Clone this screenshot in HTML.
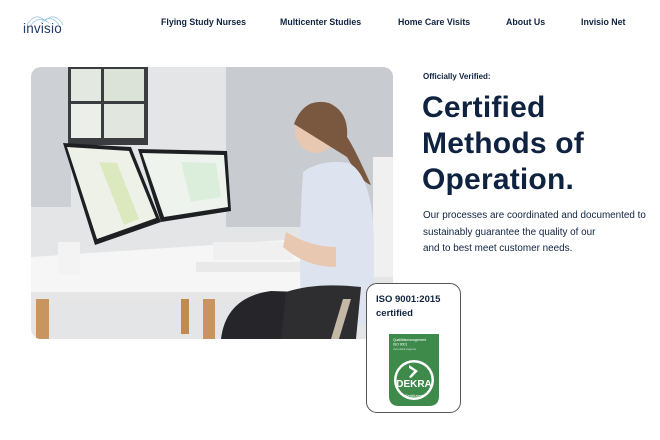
<!DOCTYPE html>
<html><head><meta charset="utf-8"><style>
*{margin:0;padding:0;box-sizing:border-box}
body{width:660px;height:440px;background:#fff;font-family:"Liberation Sans",sans-serif;color:#0f2340;position:relative;overflow:hidden}
.logo{position:absolute;left:23px;top:13px}
.logo span{position:absolute;left:0;top:8px;font-size:13.5px;color:#1f3a6b;letter-spacing:.2px}
nav a{position:absolute;top:17px;font-size:8.8px;font-weight:bold;color:#0f2340;text-decoration:none;white-space:nowrap}
.photo{position:absolute;left:31px;top:67px;width:362px;height:272px;border-radius:10px;overflow:hidden}
.ov{position:absolute;left:423px;top:72px;font-size:8px;font-weight:bold}
h1{position:absolute;left:422px;top:90px;font-size:30px;line-height:36px;font-weight:bold;letter-spacing:.2px}
.p{position:absolute;left:423px;top:208px;font-size:9.9px;line-height:16.5px;white-space:nowrap}
.card{position:absolute;left:366px;top:283px;width:95px;height:130px;background:#fff;border:1px solid #555;border-radius:11px}
.card b{position:absolute;left:9px;top:9px;font-size:9.5px;line-height:14px}
</style></head><body>
<div class="logo">
<svg width="40" height="14" viewBox="0 0 40 14" style="position:absolute;left:2px;top:0"><path d="M2 12 Q10 -2 20 8 Q30 -2 38 12 M6 12 Q14 2 24 10 M16 10 Q26 0 34 12" stroke="#9cc8e6" stroke-width="0.8" fill="none"/></svg>
<span>invisio</span></div>
<nav><a style="left:161px">Flying Study Nurses</a><a style="left:280px">Multicenter Studies</a><a style="left:398px">Home Care Visits</a><a style="left:506px">About Us</a><a style="left:581px">Invisio Net</a></nav>
<div class="photo">
<svg width="362" height="272" viewBox="0 0 362 272">
<rect width="362" height="272" fill="#e3e5e7"/>
<rect x="195" y="0" width="167" height="160" fill="#c8ccd0"/>
<rect x="0" y="0" width="40" height="140" fill="#cdd1d6"/>
<rect x="37" y="0" width="80" height="78" fill="#3a3c40"/>
<rect x="40" y="2" width="30" height="32" fill="#e3e8e1"/><rect x="73" y="2" width="40" height="32" fill="#dbe2d8"/>
<rect x="40" y="37" width="30" height="34" fill="#eceee9"/><rect x="73" y="37" width="40" height="34" fill="#e1e6df"/>
<rect x="342" y="90" width="20" height="120" fill="#f0f0f0"/>
<polygon points="32,76 100,80 130,155 64,178" fill="#1d1f22"/>
<polygon points="36,80 98,84 125,151 66,172" fill="#eef1e8"/>
<polygon points="68,95 86,96 108,152 93,158" fill="#dce9bf"/>
<polygon points="107,82 196,84 200,144 130,155" fill="#1d1f22"/>
<polygon points="111,86 193,88 197,140 133,150" fill="#eef3ee"/>
<polygon points="150,95 185,96 190,130 160,135" fill="#dbeedc"/>
<polygon points="0,190 300,170 335,210 330,225 0,235" fill="#f6f6f6"/>
<rect x="0" y="225" width="330" height="10" fill="#e6e6e6"/>
<rect x="5" y="232" width="13" height="40" fill="#c9955f"/><rect x="172" y="232" width="12" height="40" fill="#c9955f"/><rect x="150" y="232" width="8" height="35" fill="#c08a55"/>
<rect x="27" y="175" width="22" height="32" fill="#f3f3f3"/>
<rect x="165" y="195" width="105" height="10" fill="#e9e9e9"/>
<rect x="182" y="175" width="80" height="18" fill="#f0f0f0"/>
<ellipse cx="285" cy="62" rx="21" ry="24" fill="#e9c8b2"/>
<path d="M263 57 Q273 30 298 36 Q318 45 316 70 Q323 80 340 118 Q330 115 316 90 Z" fill="#7a5840"/>
<path d="M272 105 Q290 92 318 96 Q343 110 343 180 L343 258 L272 260 Q266 200 272 105 Z" fill="#dde4ef"/>
<path d="M255 165 Q280 180 305 180 L305 200 Q275 200 252 180 Z" fill="#e9c8b2"/>
<path d="M190 272 Q195 230 240 224 L300 226 L300 272 Z" fill="#26262a"/>
<path d="M250 272 L255 225 Q285 215 330 220 L325 272 Z" fill="#2e2e31"/>
<path d="M300 272 L312 232 L320 232 L308 272 Z" fill="#c3b7a6"/>
</svg></div>
<div class="ov">Officially Verified:</div>
<h1>Certified<br>Methods of<br>Operation.</h1>
<div class="p">Our processes are coordinated and documented to<br>sustainably guarantee the quality of our<br>and to best meet customer needs.</div>
<div class="card"><b>ISO 9001:2015<br>certified</b>
<svg width="50" height="72" viewBox="0 0 50 72" style="position:absolute;left:22px;top:50px">
<path d="M0 0 H50 V62 Q50 72 40 72 H10 Q0 72 0 62 Z" fill="#3d8a4a"/>
<text x="4" y="7" font-size="3.4" fill="#fff" font-family="Liberation Sans">Qualitätsmanagement</text>
<text x="4" y="11.5" font-size="3.4" fill="#fff" font-family="Liberation Sans">ISO 9001</text>
<text x="4" y="16" font-size="2.5" fill="#cfe3d2" font-family="Liberation Sans">www.dekra-siegel.de</text>
<circle cx="25" cy="46" r="20" fill="#fff"/><circle cx="25" cy="46" r="17.5" fill="#3d8a4a"/>
<path d="M20 31 L29 37 L22 44 L20 43 L25 37 L20 34 Z" fill="#fff"/>
<text x="25" y="53" font-size="10" font-weight="bold" fill="#fff" text-anchor="middle" font-family="Liberation Sans">DEKRA</text>
<text x="25" y="63" font-size="4" fill="#fff" text-anchor="middle" font-family="Liberation Sans">Zertifiziert</text>
</svg></div>
</body></html>
